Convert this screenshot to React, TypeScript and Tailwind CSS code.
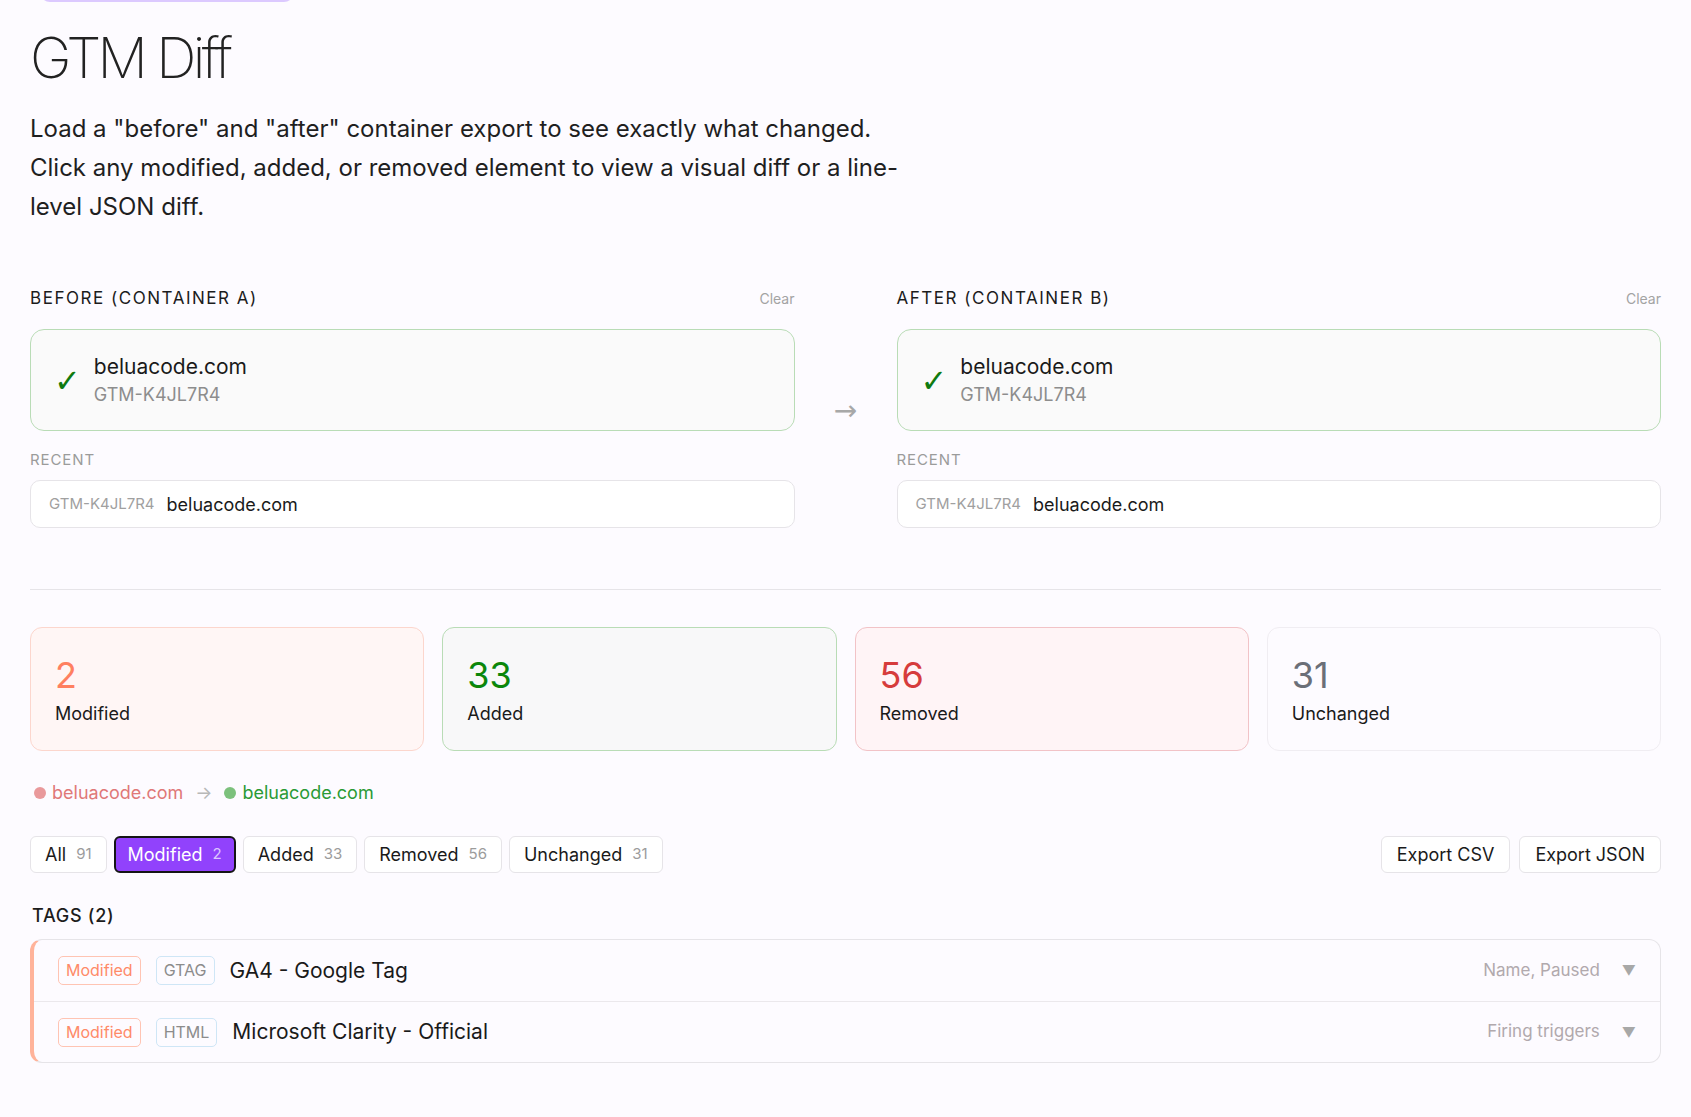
import React from 'react';

const font = { fontFamily: 'Inter, "Noto Sans", sans-serif' };
const glyph = { fontFamily: '"DejaVu Sans", sans-serif' };

type Stat = { n: number; label: string; box: string; num: string };

const stats: Stat[] = [
  { n: 2, label: 'Modified', box: 'bg-[#fff6f5] border-[#fcd6cd]', num: 'text-[#ff8060]' },
  { n: 33, label: 'Added', box: 'bg-[#f8f8f9] border-[#b9dcb6]', num: 'text-[#0b870b]' },
  { n: 56, label: 'Removed', box: 'bg-[#fff4f6] border-[#f2c3c7]', num: 'text-[#d63c3c]' },
  { n: 31, label: 'Unchanged', box: 'bg-[#fdfbff] border-[#f0edf2]', num: 'text-[#6b6f78]' },
];

const filters = [
  { label: 'All', n: 91 },
  { label: 'Modified', n: 2, active: true },
  { label: 'Added', n: 33 },
  { label: 'Removed', n: 56 },
  { label: 'Unchanged', n: 31 },
];

const rows = [
  { type: 'GTAG', name: 'GA4 - Google Tag', changes: 'Name, Paused' },
  { type: 'HTML', name: 'Microsoft Clarity - Official', changes: 'Firing triggers' },
];

function ContainerPanel({ title }: { title: string }) {
  return (
    <div>
      <div className="flex items-center justify-between mb-[19px]">
        <span className="text-[17px] leading-6 tracking-[0.09em] text-[#1c1c1c]">{title}</span>
        <span className="text-[14px] text-[#a3a3a3]">Clear</span>
      </div>
      <div className="flex items-center gap-[13px] rounded-[14px] border border-[#b9dcb6] bg-[#fafafa] pl-[23px] pt-[23px] pb-[21px]">
        <span className="text-[32px] leading-none text-[#0f7a0f]" style={glyph}>✓</span>
        <div>
          <div className="text-[21px] leading-7 text-[#1a1a1a]">beluacode.com</div>
          <div className="text-[18px] leading-7 text-[#8d8d8d]">GTM-K4JL7R4</div>
        </div>
      </div>
      <div className="mt-[19px] text-[15px] leading-5 tracking-[0.06em] text-[#9b9b9b]">RECENT</div>
      <div className="mt-[10px] flex h-[48px] items-center gap-3 rounded-[10px] border border-[#e6e4e8] bg-white px-[18px]">
        <span className="text-[15px] text-[#a0a0a0]">GTM-K4JL7R4</span>
        <span className="text-[18px] text-[#1a1a1a]">beluacode.com</span>
      </div>
    </div>
  );
}

export default function App() {
  return (
    <div className="min-h-screen bg-[#fdfbff] px-[30px] pb-[54px] text-[#1a1a1a]" style={font}>
      <div className="ml-[10px] -mt-[38px] h-[40px] w-[254px] rounded-[10px] border-2 border-[#dcc9ff]" />
      <h1 className="mt-[28px] text-[56px] leading-none font-extralight tracking-[-0.065em] text-[#222]">GTM Diff</h1>
      <p className="mt-[23px] max-w-[900px] text-[24px] leading-[39px] text-[#1f1f1f]">
        Load a "before" and "after" container export to see exactly what changed. Click any modified, added, or removed element to view a visual diff or a line-level JSON diff.
      </p>

      <div className="mt-[60px] grid grid-cols-[1fr_102px_1fr] items-center">
        <ContainerPanel title="BEFORE (CONTAINER A)" />
        <div className="flex justify-center pt-[8px] text-[28px] text-[#a8a8a8]" style={glyph}>→</div>
        <ContainerPanel title="AFTER (CONTAINER B)" />
      </div>

      <div className="mt-[61px] h-px bg-[#e6e4e8]" />

      <div className="mt-[37px] grid grid-cols-4 gap-[18px]">
        {stats.map((s) => (
          <div key={s.label} className={`rounded-[12px] border pl-[24px] pt-[27px] pb-[23px] ${s.box}`}>
            <div className={`text-[36px] leading-10 ${s.num}`}>{s.n}</div>
            <div className="mt-[6px] text-[18px] leading-[26px] text-[#1a1a1a]">{s.label}</div>
          </div>
        ))}
      </div>

      <div className="mt-[28px] flex items-center text-[18px] leading-7">
        <span className="ml-[4px] mr-[6px] h-[12px] w-[12px] rounded-full bg-[#e9999b]" />
        <span className="text-[#e07878]">beluacode.com</span>
        <span className="mx-[12px] text-[#b8b8b8]">→</span>
        <span className="mr-[6px] h-[12px] w-[12px] rounded-full bg-[#7cc17c]" />
        <span className="text-[#2a9a35]">beluacode.com</span>
      </div>

      <div className="mt-[29px] flex items-center justify-between">
        <div className="flex gap-[7px]">
          {filters.map((f) =>
            f.active ? (
              <button
                key={f.label}
                className="flex h-[37px] items-center gap-[10px] rounded-[6px] border-2 border-[#151515] bg-[#9142fc] px-[12px] text-[18px] text-white"
              >
                {f.label}
                <span className="text-[15px] text-[#dcc6ff]">{f.n}</span>
              </button>
            ) : (
              <button
                key={f.label}
                className="flex h-[37px] items-center gap-[10px] rounded-[6px] border border-[#e6e4e8] bg-white px-[14px] text-[18px] text-[#1a1a1a]"
              >
                {f.label}
                <span className="text-[15px] text-[#9c9c9c]">{f.n}</span>
              </button>
            )
          )}
        </div>
        <div className="flex gap-[9px]">
          <button className="h-[37px] rounded-[6px] border border-[#e6e4e8] bg-white px-[15px] text-[18px] text-[#1a1a1a]">Export CSV</button>
          <button className="h-[37px] rounded-[6px] border border-[#e6e4e8] bg-white px-[15px] text-[18px] text-[#1a1a1a]">Export JSON</button>
        </div>
      </div>

      <div className="mt-[31px] ml-[2px] text-[18px] leading-6 font-medium tracking-[0.04em] text-[#1c1c1c]">TAGS (2)</div>

      <div className="mt-[11px] overflow-hidden rounded-[12px] border border-[#e6e4e8] border-l-[4px] border-l-[#ffb39a] bg-[#fdfbff]">
        {rows.map((r, i) => (
          <div
            key={r.name}
            className={`flex h-[61px] items-center pl-[24px] pr-[24px] ${i > 0 ? 'border-t border-[#ebe8ec]' : ''}`}
          >
            <span className="rounded-[5px] border border-[#ffc4b3] px-[7px] py-[3px] text-[16px] leading-[21px] text-[#ff8a68]">Modified</span>
            <span className="ml-[15px] rounded-[5px] border border-[#cfe6f6] px-[7px] py-[3px] text-[16px] leading-[21px] text-[#8c8c8c]">{r.type}</span>
            <span className="ml-[15px] text-[21px] text-[#1a1a1a]">{r.name}</span>
            <span className="ml-auto text-[17px] text-[#b1a9ad]">{r.changes}</span>
            <span className="ml-[22px] text-[14px] text-[#a8a8a8]">▼</span>
          </div>
        ))}
      </div>
    </div>
  );
}
